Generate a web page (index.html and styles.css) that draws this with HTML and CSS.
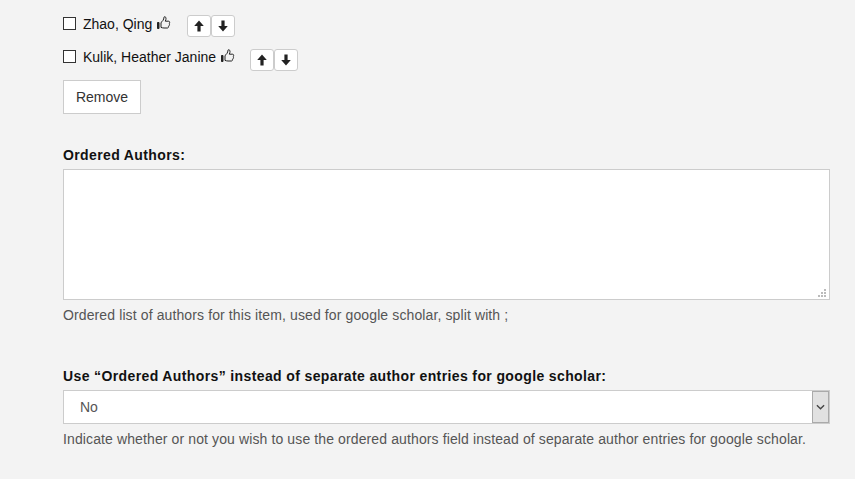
FILE: index.html
```html
<!DOCTYPE html>
<html lang="en">
<head>
    <meta charset="UTF-8">
    <title>Edit item</title>
    <link rel="stylesheet" href="styles.css">
</head>
<body>
    <div class="page">
        <div class="author-row">
            <span class="check"></span>
            <span class="author-name">Zhao, Qing</span>
            <svg class="thumb" viewBox="0 0 14 14"><path class="cuff" d="M0.500 6.500h1.500v6H0.500z"/><path d="M4 6.500c1.500-1 2.800-2.800 3-5.300 0-.8 1.900-.7 2 1 .1 1-.3 2.100-.7 3h3.200c1.300 0 1.500 1.500.7 2 .6.500.5 1.500-.2 1.800.3.600.1 1.400-.6 1.600.2.700-.2 1.400-1 1.400H7c-1.100 0-2-.3-3-.6z"/></svg>
            <div class="move-btns">
                <button class="move-btn"><svg viewBox="0 0 10 12"><path d="M5 .5 9.800 6H6.600v5.500H3.400V6H.2z"/></svg></button>
                <button class="move-btn"><svg viewBox="0 0 10 12"><path d="M3.400.5h3.200V6h3.200L5 11.500.2 6h3.200z"/></svg></button>
            </div>
        </div>
        <div class="author-row second">
            <span class="check"></span>
            <span class="author-name">Kulik, Heather Janine</span>
            <svg class="thumb" viewBox="0 0 14 14"><path class="cuff" d="M0.500 6.500h1.500v6H0.500z"/><path d="M4 6.500c1.500-1 2.800-2.800 3-5.300 0-.8 1.900-.7 2 1 .1 1-.3 2.100-.7 3h3.200c1.300 0 1.500 1.500.7 2 .6.500.5 1.500-.2 1.800.3.600.1 1.400-.6 1.600.2.700-.2 1.400-1 1.400H7c-1.100 0-2-.3-3-.6z"/></svg>
            <div class="move-btns">
                <button class="move-btn"><svg viewBox="0 0 10 12"><path d="M5 .5 9.800 6H6.600v5.500H3.400V6H.2z"/></svg></button>
                <button class="move-btn"><svg viewBox="0 0 10 12"><path d="M3.400.5h3.200V6h3.200L5 11.500.2 6h3.200z"/></svg></button>
            </div>
        </div>
        <button class="remove-btn">Remove</button>

        <div class="field">
            <label class="field-label">Ordered Authors:</label>
            <div class="textarea-box">
                <svg class="grip" viewBox="0 0 8 8"><path d="M6 0h2v2H6z M3 3h2v2H3z M6 3h2v2H6z M0 6h2v2H0z M3 6h2v2H3z M6 6h2v2H6z"/></svg>
            </div>
            <div class="hint">Ordered list of authors for this item, used for google scholar, split with ;</div>
        </div>

        <div class="field field-select">
            <label class="field-label">Use “Ordered Authors” instead of separate author entries for google scholar:</label>
            <div class="select-box">
                <span class="select-value">No</span>
                <span class="select-arrow"><svg viewBox="0 0 10 6"><path d="M1 1l4 4 4-4"/></svg></span>
            </div>
            <div class="hint">Indicate whether or not you wish to use the ordered authors field instead of separate author entries for google scholar.</div>
        </div>
    </div>
</body>
</html>
```

FILE: styles.css
```css
html, body {
    margin: 0;
    height: 100%;
}
body {
    background: #f3f3f3;
    color: #111;
    font-family: "Liberation Sans", Arial, sans-serif;
    font-size: 14px;
    overflow: hidden;
}
.page {
    width: 767px;
    padding: 15px 0 0 63px;
}
.author-row {
    display: flex;
    align-items: flex-start;
    height: 22px;
    margin-bottom: 12px;
}
.author-row.second {
    margin-bottom: 9px;
}
.check {
    width: 11px;
    height: 11px;
    margin: 2px 7px 0 0;
    border: 1px solid #333;
    background: #fff;
}
.second .check {
    margin-top: 1px;
}
.author-name {
    line-height: 18px;
}
.second .author-name {
    margin-top: -1px;
}
.thumb {
    width: 14px;
    height: 14px;
    margin: 1px 0 0 5px;
    fill: none;
    stroke: #222;
    stroke-width: 1;
}
.second .thumb {
    margin-top: 0;
}
.thumb .cuff {
    fill: #222;
}
.move-btns {
    display: flex;
    margin-left: 16px;
}
.second .move-btns {
    margin-left: 15px;
}
.move-btn {
    display: flex;
    align-items: center;
    justify-content: center;
    width: 24px;
    height: 22px;
    padding: 0;
    border: 1px solid #ccc;
    border-radius: 3px;
    background: #fff;
}
.move-btn svg {
    width: 10px;
    height: 12px;
    fill: #222;
}
.remove-btn {
    display: block;
    width: 78px;
    height: 34px;
    padding: 0;
    border: 1px solid #ccc;
    background: #fff;
    color: #333;
    font: 14px "Liberation Sans", Arial, sans-serif;
}
.field {
    margin-top: 32px;
}
.field-select {
    margin-top: 43px;
}
.field-label {
    display: block;
    height: 18px;
    margin-bottom: 5px;
    font-weight: bold;
    letter-spacing: 0.38px;
    line-height: 18px;
}
.textarea-box {
    position: relative;
    box-sizing: border-box;
    height: 131px;
    border: 1px solid #ccc;
    background: #fff;
}
.grip {
    position: absolute;
    right: 3px;
    bottom: 2px;
    width: 8px;
    height: 8px;
    fill: #bbb;
}
.hint {
    margin-top: 6px;
    color: #555;
    letter-spacing: 0.115px;
    line-height: 18px;
}
.select-box {
    display: flex;
    box-sizing: border-box;
    height: 34px;
    border: 1px solid #ccc;
    background: #fff;
}
.select-value {
    flex: 1;
    padding-left: 16px;
    color: #555;
    line-height: 32px;
}
.select-arrow {
    display: flex;
    align-items: center;
    justify-content: center;
    box-sizing: border-box;
    width: 17px;
    border: 1px solid #aaa;
    background: #e1e1e1;
}
.select-arrow svg {
    width: 9px;
    height: 6px;
    fill: none;
    stroke: #444;
    stroke-width: 1.500;
}
```
